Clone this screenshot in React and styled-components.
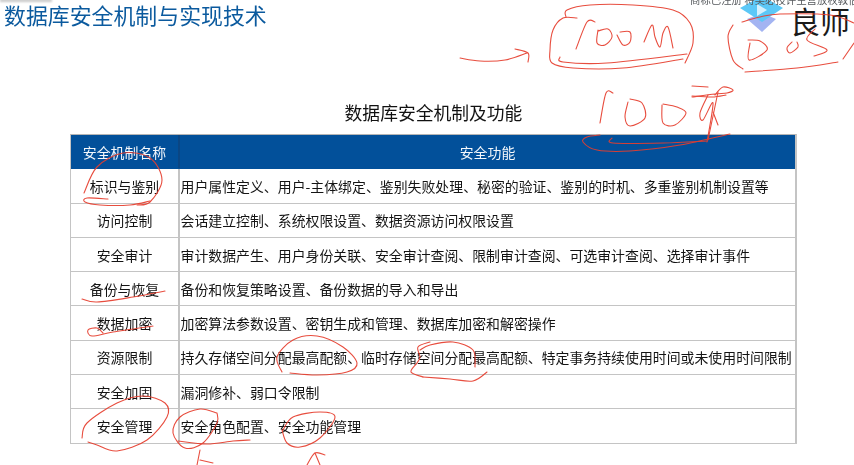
import styled, { createGlobalStyle } from "styled-components";

const Blue = "#02509a";
const Line = "#c4c4c4";
const Ink = "#e63e2e";
const CJK = `"Noto Sans CJK SC", "Liberation Sans", sans-serif`;

const GlobalStyle = createGlobalStyle`
    html, body {
        margin: 0;
        padding: 0;
        background: #fff;
    }
`

const Page = styled.div`
    position: relative;
    width: 854px;
    height: 465px;
    overflow: hidden;
    background: #fff;
    font-family: ${CJK};
    color: #141414;
`

const Content = styled.div`
    display: flex;
    flex-direction: column;
    padding-left: 4px;
    filter: blur(0.3px);
`

const Title = styled.h1`
    margin: 0;
    height: 33px;
    font-size: 21.9px;
    line-height: 29px;
    font-weight: 400;
    color: #0b5a9e;
    white-space: nowrap;
`

const TableBlock = styled.section`
    display: flex;
    flex-direction: column;
    width: 727px;
    margin: 64px 0 0 66px;
`

const Subtitle = styled.h2`
    margin: 0;
    height: 37px;
    font-size: 17.8px;
    line-height: 30px;
    font-weight: 400;
    text-align: center;
    color: #111;
`

const Table = styled.div`
    border-top: 1px solid #b5b5b5;
    border-right: 2px solid ${Line};
    border-left: 1px solid ${Line};
`

const Row = styled.div`
    display: grid;
    grid-template-columns: 109px 1fr;
    height: 34.3px;
    box-sizing: border-box;
    border-bottom: 1px solid ${p => p.$head ? Blue : Line};
    background: ${p => p.$head ? Blue : "transparent"};
    color: ${p => p.$head ? "#f4f8fc" : "inherit"};
`

const NameCell = styled.div`
    display: flex;
    align-items: center;
    justify-content: center;
    font-size: 13.9px;
    border-right: 2px solid ${p => p.$head ? "#0a4684" : Line};
`

const InfoCell = styled.div`
    display: flex;
    align-items: center;
    justify-content: ${p => p.$head ? "center" : "flex-start"};
    padding-left: ${p => p.$head ? "0" : "0.5px"};
    font-size: 13.9px;
    white-space: nowrap;
`

const Corner = styled.div`
    position: absolute;
    top: -1px;
    left: 0;
    width: 52px;
    height: 3px;
    background: #c9c9c9;
    filter: blur(1px);
`

const Watermark = styled.div`
    position: absolute;
    top: -7px;
    left: 690px;
    right: 0;
    display: flex;
    flex-direction: column;
`

const TopNote = styled.div`
    font-size: 10.4px;
    line-height: 14px;
    color: #55585c;
    white-space: nowrap;
    overflow: hidden;
    filter: blur(0.4px);
`

const BrandRow = styled.div`
    display: flex;
    align-items: flex-start;
    padding-left: 48px;
    gap: 4px;
`

const Logo = styled.svg`
    margin-top: -8px;
    flex: none;
`

const Brand = styled.div`
    position: relative;
    margin-top: -5px;
    font-size: 30px;
    line-height: 36px;
    color: #1a1a1a;
    white-space: nowrap;
`

const Ghost = styled.span`
    position: absolute;
    top: -6px;
    left: 0;
    font-size: 26px;
    line-height: 30px;
    color: #e2e2e2;
    z-index: -1;
    filter: blur(0.6px);
`

const InkLayer = styled.svg`
    position: absolute;
    inset: 0;
    fill: none;
    stroke: ${Ink};
    stroke-width: 1.1;
    stroke-linecap: round;
    stroke-linejoin: round;
    opacity: 0.92;
`

const rows = [
    ["标识与鉴别", "用户属性定义、用户-主体绑定、鉴别失败处理、秘密的验证、鉴别的时机、多重鉴别机制设置等"],
    ["访问控制", "会话建立控制、系统权限设置、数据资源访问权限设置"],
    ["安全审计", "审计数据产生、用户身份关联、安全审计查阅、限制审计查阅、可选审计查阅、选择审计事件"],
    ["备份与恢复", "备份和恢复策略设置、备份数据的导入和导出"],
    ["数据加密", "加密算法参数设置、密钥生成和管理、数据库加密和解密操作"],
    ["资源限制", "持久存储空间分配最高配额、临时存储空间分配最高配额、特定事务持续使用时间或未使用时间限制"],
    ["安全加固", "漏洞修补、弱口令限制"],
    ["安全管理", "安全角色配置、安全功能管理"],
]

// pen strokes as point lists, page coordinates
const strokes = [
    // arrow
    [[460,58],[480,61],[505,60],[527,53]],
    [[515,49],[528,53],[528,62]],
    // 100M ring
    [[566,17],[567,10],[590,5],[633,5],[673,10],[690,23],[693,43],[685,63]],
    [[577,18],[563,18],[553,30],[550,50],[552,63],[573,68],[623,68],[683,59]],
    [[560,57],[563,62],[607,63],[687,54]],
    [[595,22],[587,22],[576,49]],
    [[598,30],[597,43],[605,45],[612,37],[608,29],[598,31]],
    [[617,35],[623,45],[630,42],[630,32],[620,32]],
    [[644,42],[652,25],[655,37],[660,47],[663,33],[668,27],[673,48]],
    // 005 ring
    [[742,22],[760,17],[780,14],[830,15],[854,23]],
    [[733,25],[728,37],[733,60],[743,69]],
    [[745,72],[797,68],[838,62]],
    [[843,59],[854,43]],
    [[750,43],[749,60],[767,50],[760,41],[748,40]],
    [[792,42],[787,48],[790,53],[798,47],[797,42]],
    [[815,29],[807,40],[827,50],[814,56]],
    // 100 with scribble
    [[613,93],[606,93],[600,123]],
    [[628,102],[625,117],[630,126],[645,118],[642,103],[630,99]],
    [[662,105],[663,123],[675,125],[686,113],[677,107],[663,104]],
    [[708,95],[700,113],[703,120],[713,103],[707,142]],
    [[718,92],[708,140]],
    [[713,112],[718,125]],
    [[692,97],[715,94],[727,93],[733,90],[723,87],[715,95]],
    [[692,86],[708,87]],
    [[692,96],[712,97],[726,95]],
    [[600,135],[587,137],[583,142],[597,150],[630,151],[680,145],[730,134]],
    [[612,138],[613,143],[663,143],[707,141]],
    // first column
    [[84,193],[97,167],[123,153],[150,158],[162,180],[150,202],[137,205]],
    [[108,199],[87,198],[85,202],[100,205],[130,205],[150,201]],
    [[82,299],[97,302],[133,297],[165,291]],
    [[153,326],[113,332],[92,336],[88,330],[97,328],[103,333]],
    [[82,438],[87,423],[117,403],[143,396],[165,403],[167,417],[147,440],[117,451],[97,445],[88,442]],
    // second column
    [[282,372],[277,357],[293,340],[317,336],[343,347],[357,363],[347,372],[317,375],[290,373]],
    [[430,342],[418,347],[420,357],[417,363],[411,372],[423,377]],
    [[420,350],[430,345],[453,342],[473,350],[475,367]],
    [[423,377],[450,379],[473,381],[487,372]],
    [[217,413],[200,409],[180,417],[173,433],[185,448],[203,443],[217,423],[217,413]],
    [[178,441],[207,444],[233,441],[250,440]],
    [[282,430],[287,443],[300,447],[320,438],[335,417],[320,412],[293,417],[283,430]],
    // small arrows under the table
    [[197,465],[200,450]],
    [[200,460],[213,463]],
    [[307,465],[315,453],[325,455]],
    [[315,453],[320,465]],
]

const smooth = (pts) => {
    let d = `M${pts[0][0]} ${pts[0][1]}`
    for (let i = 0; i < pts.length - 1; i++) {
        const p0 = pts[i - 1] || pts[i]
        const p1 = pts[i]
        const p2 = pts[i + 1]
        const p3 = pts[i + 2] || p2
        const c1 = [p1[0] + (p2[0] - p0[0]) / 6, p1[1] + (p2[1] - p0[1]) / 6]
        const c2 = [p2[0] - (p3[0] - p1[0]) / 6, p2[1] - (p3[1] - p1[1]) / 6]
        d += ` C${c1[0]} ${c1[1]} ${c2[0]} ${c2[1]} ${p2[0]} ${p2[1]}`
    }
    return d
}

const App = () => {
    return (
        <Page>
            <GlobalStyle />
            <Corner />
            <Content>
                <Title>数据库安全机制与实现技术</Title>
                <TableBlock>
                    <Subtitle>数据库安全机制及功能</Subtitle>
                    <Table>
                        <Row $head>
                            <NameCell $head>安全机制名称</NameCell>
                            <InfoCell $head>安全功能</InfoCell>
                        </Row>
                        {rows.map(([name, info]) => (
                            <Row key={name}>
                                <NameCell>{name}</NameCell>
                                <InfoCell>{info}</InfoCell>
                            </Row>
                        ))}
                    </Table>
                </TableBlock>
            </Content>
            <Watermark>
                <TopNote>商标已注册 将奖必技评主营放权教估行为</TopNote>
                <BrandRow>
                    <Logo width="48" height="36" viewBox="0 0 48 36">
                        <path d="M9 20 L24 14 L38 20 L24 33 Z" fill="#a3b4f2" />
                        <path d="M2 9 L24 -3 L45 9 L24 23 Z" fill="#5cc8f7" />
                        <path d="M19 5 L19 17 L29 11 Z" fill="#d6f1fd" />
                    </Logo>
                    <Brand>
                        <Ghost>良师</Ghost>
                        良师
                    </Brand>
                </BrandRow>
            </Watermark>
            <InkLayer width="854" height="465" viewBox="0 0 854 465">
                {strokes.map((pts, i) => <path key={i} d={smooth(pts)} />)}
            </InkLayer>
        </Page>
    )
}

export default App
